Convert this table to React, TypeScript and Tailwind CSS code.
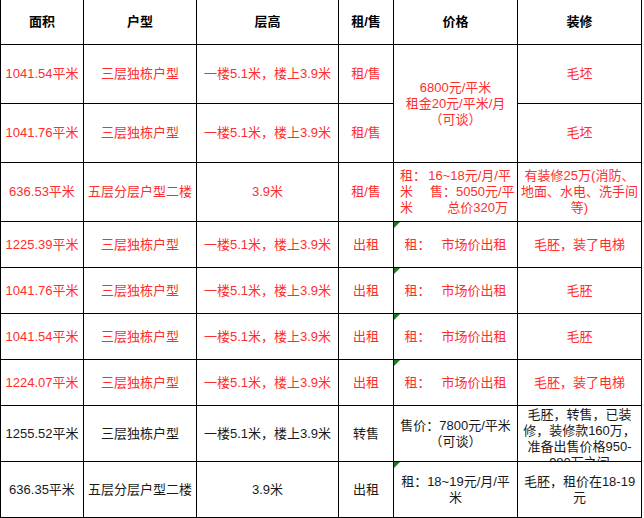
import type { ReactNode } from "react";

const RED = "text-[#ff2d2d]";
const DARK = "text-[#1a1a1a]";

type Row = {
  area: string;
  type: string;
  floor: string;
  rent: string;
  decor: ReactNode;
  price?: ReactNode;
  flag?: boolean;
  tone: string;
};

function Cell({ children, className = "" }: { children?: ReactNode; className?: string }) {
  return (
    <div className={`relative flex items-center justify-center overflow-hidden bg-white text-center ${className}`}>
      {children}
    </div>
  );
}

function Flag() {
  return (
    <svg className="absolute left-0 top-0" width="6" height="6" viewBox="0 0 6 6">
      <polygon points="0,0 6,0 0,6" fill="#1d7a1d" />
    </svg>
  );
}

const rows: Row[] = [
  { area: "1041.54平米", type: "三层独栋户型", floor: "一楼5.1米，楼上3.9米", rent: "租/售", decor: "毛坯", tone: RED },
  { area: "1041.76平米", type: "三层独栋户型", floor: "一楼5.1米，楼上3.9米", rent: "租/售", decor: "毛坯", tone: RED },
  {
    area: "636.53平米",
    type: "五层分层户型二楼",
    floor: "3.9米",
    rent: "租/售",
    tone: RED,
    price: (
      <div className="w-full px-[6px] text-left">
        <div className="flex justify-between">
          <span>租：</span>
          <span>16~18元/月/平</span>
        </div>
        <div className="flex">
          <span>米</span>
          <span className="ml-[17px]">售：</span>
          <span className="ml-auto">5050元/平</span>
        </div>
        <div className="flex justify-between">
          <span>米</span>
          <span className="mr-[3px]">总价320万</span>
        </div>
      </div>
    ),
    decor: (
      <div>
        有装修25万(消防、
        <br />
        地面、水电、洗手间
        <br />
        等)
      </div>
    ),
  },
  { area: "1225.39平米", type: "三层独栋户型", floor: "一楼5.1米，楼上3.9米", rent: "出租", price: "租：   市场价出租", flag: true, decor: "毛胚，装了电梯", tone: RED },
  { area: "1041.76平米", type: "三层独栋户型", floor: "一楼5.1米，楼上3.9米", rent: "出租", price: "租：   市场价出租", flag: true, decor: "毛胚", tone: RED },
  { area: "1041.54平米", type: "三层独栋户型", floor: "一楼5.1米，楼上3.9米", rent: "出租", price: "租：   市场价出租", flag: true, decor: "毛胚", tone: RED },
  { area: "1224.07平米", type: "三层独栋户型", floor: "一楼5.1米，楼上3.9米", rent: "出租", price: "租：   市场价出租", flag: true, decor: "毛胚，装了电梯", tone: RED },
  {
    area: "1255.52平米",
    type: "三层独栋户型",
    floor: "一楼5.1米，楼上3.9米",
    rent: "转售",
    tone: DARK,
    price: (
      <div>
        售价：7800元/平米
        <br />
        （可谈）
      </div>
    ),
    decor: "overflow",
  },
  {
    area: "636.35平米",
    type: "五层分层户型二楼",
    floor: "3.9米",
    rent: "出租",
    flag: true,
    tone: DARK,
    price: (
      <div>
        租：18~19元/月/平
        <br />
        米
      </div>
    ),
    decor: (
      <div>
        毛胚，租价在18-19
        <br />
        元
      </div>
    ),
  },
];

export default function App() {
  return (
    <div className="h-[518px] w-[644px] bg-white font-['Liberation_Sans','Noto_Sans_CJK_SC',sans-serif] text-[13px] leading-4">
      <div className="grid w-[642px] grid-cols-[82px_112px_141px_54px_123px_123px] grid-rows-[44px_58px_58px_58px_45px_45px_45px_45px_55px_55px] gap-px bg-black px-px pb-px">
        {["面积", "户型", "层高", "租/售", "价格", "装修"].map((h) => (
          <Cell key={h} className="font-bold text-black">
            {h}
          </Cell>
        ))}

        {rows.map((r, i) => (
          <div key={i} className="contents">
            <Cell className={r.tone}>{r.area}</Cell>
            <Cell className={r.tone}>{r.type}</Cell>
            <Cell className={r.tone}>{r.floor}</Cell>
            <Cell className={r.tone}>{r.rent}</Cell>
            {i === 0 && (
              <Cell className={`row-span-2 ${r.tone}`}>
                <div>
                  6800元/平米
                  <br />
                  租金20元/平米/月
                  <br />
                  （可谈）
                </div>
              </Cell>
            )}
            {i > 1 && (
              <Cell className={`whitespace-pre ${r.tone}`}>
                {r.flag && <Flag />}
                {r.price}
              </Cell>
            )}
            {r.decor === "overflow" ? (
              <Cell className={`items-start pt-px ${r.tone}`}>
                <div>
                  毛胚，转售，已装
                  <br />
                  修，装修款160万，
                  <br />
                  准备出售价格950-
                  <br />
                  980万之间
                </div>
              </Cell>
            ) : (
              <Cell className={r.tone}>{r.decor}</Cell>
            )}
          </div>
        ))}
      </div>
    </div>
  );
}
